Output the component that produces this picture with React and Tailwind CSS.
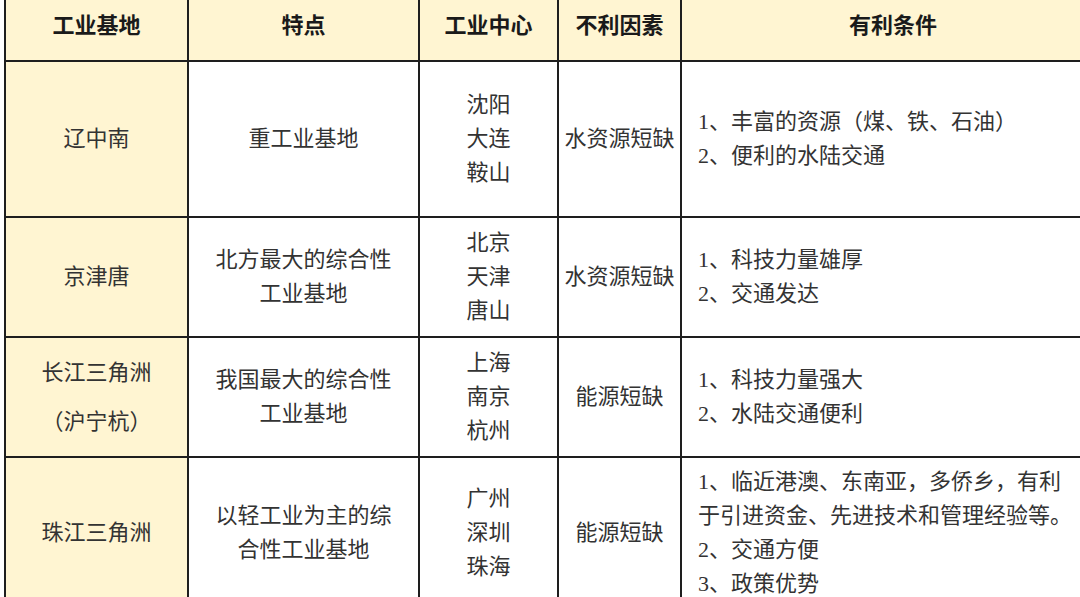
const rows = [
  {
    base: ['辽中南'],
    feature: ['重工业基地'],
    cities: ['沈阳', '大连', '鞍山'],
    weak: '水资源短缺',
    strong: ['1、丰富的资源（煤、铁、石油）', '2、便利的水陆交通'],
    h: 'h-[156px]',
  },
  {
    base: ['京津唐'],
    feature: ['北方最大的综合性', '工业基地'],
    cities: ['北京', '天津', '唐山'],
    weak: '水资源短缺',
    strong: ['1、科技力量雄厚', '2、交通发达'],
    h: 'h-[120px]',
  },
  {
    base: ['长江三角洲', '（沪宁杭）'],
    feature: ['我国最大的综合性', '工业基地'],
    cities: ['上海', '南京', '杭州'],
    weak: '能源短缺',
    strong: ['1、科技力量强大', '2、水陆交通便利'],
    h: 'h-[120px]',
  },
  {
    base: ['珠江三角洲'],
    feature: ['以轻工业为主的综', '合性工业基地'],
    cities: ['广州', '深圳', '珠海'],
    weak: '能源短缺',
    strong: [
      '1、临近港澳、东南亚，多侨乡，有利',
      '于引进资金、先进技术和管理经验等。',
      '2、交通方便',
      '3、政策优势',
    ],
    h: 'h-[152px]',
  },
];

const cell = 'border-2 border-[#1e1e1e] align-middle';

export default function App() {
  return (
    <div
      className="w-[1080px] h-[597px] overflow-hidden bg-white"
      style={{ fontFamily: '"Liberation Serif", "Noto Sans CJK SC", serif' }}
    >
      <table className="table-fixed border-collapse ml-[4px] -mt-[2px] w-[1100px] text-[22px] leading-[34px] text-[#333]">
        <colgroup>
          <col className="w-[183px]" />
          <col className="w-[231px]" />
          <col className="w-[139px]" />
          <col className="w-[123px]" />
          <col className="w-[424px]" />
        </colgroup>
        <thead>
          <tr className="h-[62px] bg-[#fff5d2] text-[#1a1a1a] font-bold">
            <th className={`${cell} pb-[8px]`}>工业基地</th>
            <th className={`${cell} pb-[8px]`}>特点</th>
            <th className={`${cell} pb-[8px]`}>工业中心</th>
            <th className={`${cell} pb-[8px]`}>不利因素</th>
            <th className={`${cell} pb-[8px]`}>有利条件</th>
          </tr>
        </thead>
        <tbody>
          {rows.map((r, i) => (
            <tr key={i} className={r.h}>
              <td className={`${cell} bg-[#fff5d2] text-center`}>
                <div className="flex flex-col items-center gap-[15px]">
                  {r.base.map((t) => (
                    <span key={t}>{t}</span>
                  ))}
                </div>
              </td>
              <td className={`${cell} text-center`}>
                {r.feature.map((t) => (
                  <div key={t}>{t}</div>
                ))}
              </td>
              <td className={`${cell} text-center`}>
                {r.cities.map((t) => (
                  <div key={t}>{t}</div>
                ))}
              </td>
              <td className={`${cell} text-center whitespace-nowrap`}>{r.weak}</td>
              <td className={`${cell} pl-[16px] whitespace-nowrap`}>
                {r.strong.map((t) => (
                  <div key={t}>{t}</div>
                ))}
              </td>
            </tr>
          ))}
        </tbody>
      </table>
    </div>
  );
}
